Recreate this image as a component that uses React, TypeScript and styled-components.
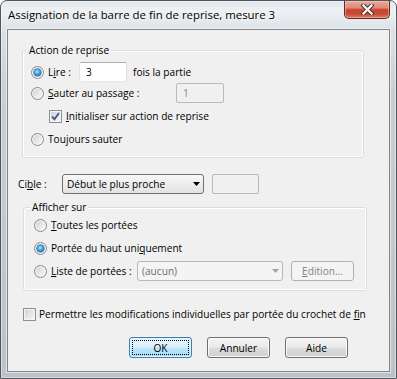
import React from "react";
import styled, { createGlobalStyle, css } from "styled-components";

const GlobalStyle = createGlobalStyle`
  html, body { margin: 0; padding: 0; }
  body {
    width: 397px;
    height: 379px;
    overflow: hidden;
    background: #ffffff;
    font-family: "Open Sans", "Noto Sans", sans-serif;
    font-size: 10.15px;
    color: #000;
  }
`;

const Window = styled.div`
  box-sizing: border-box;
  width: 397px;
  height: 379px;
  display: flex;
  flex-direction: column;
  padding: 0 6px 6px;
  border: 1px solid #50565c;
  border-radius: 7px 7px 0 0;
  background: linear-gradient(180deg, #e2e7ec 0px, #eef1f4 10px, #dce2e7 28px, #c9cfd5 90px, #bcc2c8 100%);
  box-shadow: inset 0 0 0 1px rgba(255, 255, 255, 0.45);
`;

const TitleBar = styled.div`
  flex: none;
  height: 28px;
  display: flex;
  align-items: flex-start;
`;

const Title = styled.div`
  margin: 6px 0 0 1px;
  font-size: 11.4px;
  line-height: 16px;
  color: #000;
  white-space: nowrap;
  text-shadow: 0 0 8px rgba(255, 255, 255, 0.95), 0 0 3px rgba(255, 255, 255, 0.8);
`;

const CloseButton = styled.div`
  margin-left: auto;
  width: 46px;
  height: 18px;
  box-sizing: border-box;
  border: 1px solid #5e2a20;
  border-top: none;
  border-radius: 0 0 5px 5px;
  background: linear-gradient(180deg, #e9a99b 0%, #dd8a78 40%, #c8452f 52%, #c64a34 75%, #e07a62 100%);
  box-shadow: inset 0 0 0 1px rgba(255, 220, 210, 0.45);
  display: flex;
  align-items: center;
  justify-content: center;
`;

const Client = styled.div`
  flex: 1;
  display: flex;
  flex-direction: column;
  align-items: flex-start;
  background: #f0f0f0;
  border: 1px solid #7d848a;
  box-shadow: 0 0 0 1px rgba(255, 255, 255, 0.55);
`;

const Group = styled.fieldset<{ $mt: number; $ml: number; $w: number }>`
  box-sizing: border-box;
  min-width: 0;
  margin: ${(p) => p.$mt}px 0 0 ${(p) => p.$ml}px;
  width: ${(p) => p.$w}px;
  padding: 0;
  border: 1px solid #d5dfe5;
  border-radius: 3px;
  box-shadow: inset 0 0 0 1px #ffffff;
`;

const Legend = styled.legend<{ $ml: number }>`
  margin-left: ${(p) => p.$ml}px;
  padding: 0 2px;
  line-height: 14px;
  background: #f0f0f0;
`;

const GroupBody = styled.div<{ $pl: number; $pt: number; $pb: number }>`
  padding: ${(p) => p.$pt}px 0 ${(p) => p.$pb}px ${(p) => p.$pl}px;
`;

const Row = styled.div<{ $mt?: number; $ml?: number; $h?: number }>`
  display: flex;
  align-items: center;
  height: ${(p) => p.$h ?? 20}px;
  margin-top: ${(p) => p.$mt ?? 0}px;
  margin-left: ${(p) => p.$ml ?? 0}px;
  white-space: nowrap;
`;

const Label = styled.span<{ $w?: number; $ml?: number; $disabled?: boolean }>`
  flex: none;
  ${(p) => p.$w !== undefined && css`width: ${p.$w}px;`}
  margin-left: ${(p) => p.$ml ?? 0}px;
  color: ${(p) => (p.$disabled ? "#6d6d6d" : "#000")};
  line-height: 14px;
`;

const Key = styled.span`
  text-decoration: underline;
  text-underline-offset: 1px;
`;

const Radio = styled.span<{ $checked?: boolean }>`
  position: relative;
  flex: none;
  box-sizing: border-box;
  width: 13px;
  height: 13px;
  border-radius: 50%;
  border: 1px solid #8a8a8a;
  background: linear-gradient(135deg, #cdcdcd 0%, #e6e6e6 50%, #fdfdfd 100%);
  box-shadow: inset 0 0 0 1px #f6f6f6;
  ${(p) =>
    p.$checked &&
    css`
      &::after {
        content: "";
        position: absolute;
        left: 2px;
        top: 2px;
        width: 7px;
        height: 7px;
        border-radius: 50%;
        background: radial-gradient(circle at 45% 40%, #c2efff 0%, #45b2ee 35%, #1a72b6 70%, #0d4174 100%);
        box-shadow: 0 0 0 0.5px #1c4f78;
      }
    `}
`;

const CheckBox = styled.span`
  flex: none;
  box-sizing: border-box;
  width: 13px;
  height: 13px;
  border: 1px solid #8e8f8f;
  background: linear-gradient(135deg, #c9cbcd 0%, #e4e5e6 50%, #f8f8f8 100%);
  box-shadow: inset 0 0 0 1px #f4f4f4;
  display: flex;
  align-items: center;
  justify-content: center;
`;

const Field = styled.div<{ $w: number; $ml?: number; $disabled?: boolean }>`
  box-sizing: border-box;
  flex: none;
  width: ${(p) => p.$w}px;
  height: 20px;
  margin-left: ${(p) => p.$ml ?? 0}px;
  padding-left: 6px;
  display: flex;
  align-items: center;
  border: 1px solid;
  border-radius: 2px;
  ${(p) =>
    p.$disabled
      ? css`
          border-color: #b5babe;
          background: #f0f0f0;
          color: #838383;
        `
      : css`
          border-color: #abadb3 #dbdfe6 #e3e9ef #e2e3ea;
          background: #ffffff;
          color: #000;
        `}
`;

const Combo = styled.div<{ $w: number; $disabled?: boolean }>`
  box-sizing: border-box;
  flex: none;
  width: ${(p) => p.$w}px;
  height: 20px;
  display: flex;
  align-items: center;
  justify-content: space-between;
  padding: 0 3px 0 4px;
  border: 1px solid;
  border-radius: 3px;
  ${(p) =>
    p.$disabled
      ? css`
          border-color: #b5babe;
          background: #f4f4f4;
          color: #6d6d6d;
        `
      : css`
          border-color: #707070;
          background: linear-gradient(180deg, #f7f7f7 0%, #eeeeee 50%, #e2e2e2 100%);
          color: #000;
        `}
`;

const Button = styled.button<{ $default?: boolean; $h?: number; $ml?: number }>`
  box-sizing: border-box;
  flex: none;
  width: 63px;
  height: ${(p) => p.$h ?? 21}px;
  margin: 0 0 0 ${(p) => p.$ml ?? 0}px;
  padding: 0;
  font: inherit;
  color: #000;
  border: 1px solid #707070;
  border-radius: 3px;
  background: linear-gradient(180deg, #f2f2f2 0%, #ebebeb 48%, #dddddd 52%, #cfcfcf 100%);
  box-shadow: inset 0 0 0 1px #fcfcfc;
  ${(p) =>
    p.$default &&
    css`
      border-color: #3c7fb1;
      background: linear-gradient(180deg, #eaf6fd 0%, #d9f0fc 48%, #bee6fd 52%, #a7d9f5 100%);
      box-shadow: inset 0 0 0 1px #dff2fd;
      outline: 1px dotted #000;
      outline-offset: -4px;
    `}
  &:disabled {
    border-color: #adb2b5;
    background: #f4f4f4;
    color: #838383;
    box-shadow: none;
  }
`;

const ButtonRow = styled.div`
  display: flex;
  gap: 15px;
  margin: 13px 0 0 121px;
`;

const CloseIcon = () => (
  <svg width="13" height="11" viewBox="0 0 13 11">
    <path d="M2.5 1.5 L10.5 9.5 M10.5 1.5 L2.5 9.5" stroke="#4a2a22" strokeWidth="4.2" strokeLinecap="square" />
    <path d="M2.5 1.5 L10.5 9.5 M10.5 1.5 L2.5 9.5" stroke="#f4f4f4" strokeWidth="2.4" strokeLinecap="square" />
  </svg>
);

const CheckMark = () => (
  <svg width="9" height="9" viewBox="0 0 9 9">
    <path d="M1 4.5 L3.4 7.2 L8 1" fill="none" stroke="#3f5391" strokeWidth="1.8" />
  </svg>
);

const Arrow = ({ color }: { color: string }) => (
  <svg width="7" height="4" viewBox="0 0 7 4">
    <polygon points="0,0 7,0 3.5,4" fill={color} />
  </svg>
);

export default function App() {
  return (
    <>
      <GlobalStyle />
      <Window>
        <TitleBar>
          <Title>Assignation de la barre de fin de reprise, mesure 3</Title>
          <CloseButton aria-label="Fermer">
            <CloseIcon />
          </CloseButton>
        </TitleBar>
        <Client>
          <Group $mt={13} $ml={14} $w={342}>
            <Legend $ml={4}>Action de reprise</Legend>
            <GroupBody $pl={8} $pt={5} $pb={8}>
              <Row>
                <Radio $checked />
                <Label $ml={4} $w={31}>
                  L<Key>i</Key>re :
                </Label>
                <Field $w={48}>3</Field>
                <Label $ml={6}>fois la partie</Label>
              </Row>
              <Row $mt={1}>
                <Radio />
                <Label $ml={4} $w={128}>
                  <Key>S</Key>auter au passage :
                </Label>
                <Field $w={48} $disabled>
                  1
                </Field>
              </Row>
              <Row $mt={3} $ml={18}>
                <CheckBox>
                  <CheckMark />
                </CheckBox>
                <Label $ml={4}>
                  <Key>I</Key>nitialiser sur action de reprise
                </Label>
              </Row>
              <Row $mt={3}>
                <Radio />
                <Label $ml={4}>
                  Tou<Key>j</Key>ours sauter
                </Label>
              </Row>
            </GroupBody>
          </Group>

          <Row $mt={16} $ml={10}>
            <Label $w={44}>
              Ci<Key>b</Key>le :
            </Label>
            <Combo $w={142}>
              Début le plus proche
              <Arrow color="#000" />
            </Combo>
            <Field $w={47} $ml={8} $disabled />
          </Row>

          <Group $mt={6} $ml={15} $w={344}>
            <Legend $ml={6}>Afficher sur</Legend>
            <GroupBody $pl={10} $pt={1} $pb={9}>
              <Row>
                <Radio />
                <Label $ml={4}>
                  <Key>T</Key>outes les portées
                </Label>
              </Row>
              <Row $mt={3}>
                <Radio $checked />
                <Label $ml={4}>
                  Portée du haut uni<Key>q</Key>uement
                </Label>
              </Row>
              <Row $mt={3}>
                <Radio />
                <Label $ml={4} $w={86}>
                  <Key>L</Key>iste de portées :
                </Label>
                <Combo $w={146} $disabled>
                  (aucun)
                  <Arrow color="#a3a3a3" />
                </Combo>
                <Button $h={20} $ml={8} disabled>
                  <Key>E</Key>dition...
                </Button>
              </Row>
            </GroupBody>
          </Group>

          <Row $mt={13} $ml={15}>
            <CheckBox />
            <Label $ml={3}>
              Permettre les modifications individuelles par portée du crochet de <Key>f</Key>in
            </Label>
          </Row>

          <ButtonRow>
            <Button $default>OK</Button>
            <Button>Annuler</Button>
            <Button>Aide</Button>
          </ButtonRow>
        </Client>
      </Window>
    </>
  );
}
